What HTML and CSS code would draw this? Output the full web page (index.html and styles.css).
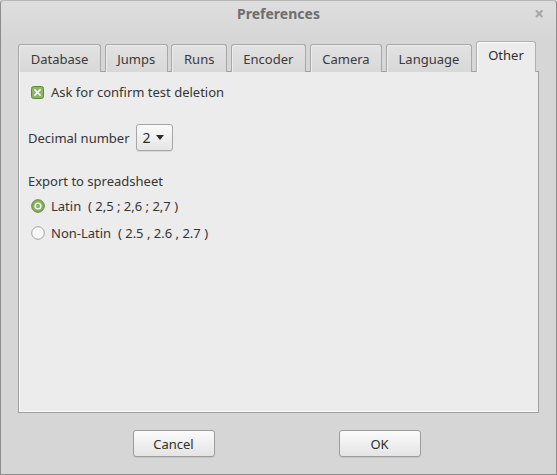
FILE: index.html
```html
<!DOCTYPE html>
<html>
<head>
<meta charset="utf-8">
<link rel="stylesheet" href="styles.css">
</head>
<body>
<div class="window">
  <div class="titlebar">
    <span></span>
    <span class="title">Preferences</span>
    <span class="close">×</span>
  </div>
  <div class="notebook">
    <div class="tabs">
      <div class="tab">Database</div>
      <div class="tab">Jumps</div>
      <div class="tab">Runs</div>
      <div class="tab">Encoder</div>
      <div class="tab">Camera</div>
      <div class="tab">Language</div>
      <div class="tab active">Other</div>
    </div>
    <div class="panel">
      <div class="row check-row">
        <svg class="check" width="13" height="13" viewBox="0 0 13 13">
          <rect x="0.5" y="0.5" width="12" height="12" rx="2" fill="#8db466" stroke="#5e8a3e"/>
          <path d="M4 4 L9 9 M9 4 L4 9" stroke="#ffffff" stroke-width="1.6" stroke-linecap="square"/>
        </svg>
        <span>Ask for confirm test deletion</span>
      </div>
      <div class="row decimal-row">
        <span>Decimal number</span>
        <div class="combo"><span>2</span><span class="arrow"></span></div>
      </div>
      <div class="row label-row">Export to spreadsheet</div>
      <div class="row radio-row">
        <svg class="radio" width="14" height="14" viewBox="0 0 14 14">
          <circle cx="7" cy="7" r="6.3" fill="#86b060" stroke="#5c8a3c"/>
          <circle cx="7" cy="7" r="3.6" fill="#ffffff"/>
          <circle cx="7" cy="7" r="2.2" fill="#8ab866"/>
        </svg>
        <span>Latin&nbsp; ( 2,5 ; 2,6 ; 2,7 )</span>
      </div>
      <div class="row radio-row">
        <svg class="radio" width="14" height="14" viewBox="0 0 14 14">
          <circle cx="7" cy="7" r="6.3" fill="#f7f7f7" stroke="#a2a2a2"/>
        </svg>
        <span>Non-Latin&nbsp; ( 2.5 , 2.6 , 2.7 )</span>
      </div>
    </div>
  </div>
  <div class="buttons">
    <div class="btn">Cancel</div>
    <div class="btn">OK</div>
  </div>
</div>
</body>
</html>
```
FILE: styles.css
```css
html, body {
  margin: 0;
  padding: 0;
  background: #d6d6d6;
}
body {
  font-family: "Noto Sans", "DejaVu Sans", sans-serif;
  font-size: 13px;
  color: #353535;
}
.window {
  width: 557px;
  height: 475px;
  box-sizing: border-box;
  border: 1px solid #8d8d8d;
  border-top-color: #b8b8b8;
  border-radius: 4px 4px 0 0;
  background: linear-gradient(#dedede, #d6d6d6 40px);
  display: flex;
  flex-direction: column;
}
.titlebar {
  height: 25px;
  display: grid;
  grid-template-columns: 1fr auto 1fr;
  align-items: center;
}
.title {
  font-weight: bold;
  font-size: 14px;
  color: #6e6e6e;
}
.close {
  justify-self: end;
  margin-right: 12px;
  font-size: 17px;
  font-weight: bold;
  color: #a4a4a4;
}
.notebook {
  margin: 16px 0 0 17px;
  width: 521px;
}
.tabs {
  display: flex;
  align-items: flex-end;
  gap: 3.5px;
  height: 30px;
  position: relative;
  z-index: 1;
  margin-bottom: -1px;
}
.tab {
  height: 28px;
  box-sizing: border-box;
  padding: 0 11.7px;
  line-height: 28px;
  white-space: nowrap;
  border: 1px solid #a8a8a8;
  border-bottom: none;
  border-radius: 3px 3px 0 0;
  background: linear-gradient(#e2e2e2, #d8d8d8);
  box-shadow: inset 1px 1px 0 #ececec;
  color: #3a3a3a;
}
.tab.active {
  height: 31px;
  line-height: 27px;
  background: #ececec;
  border-color: #b0b0b0;
  box-shadow: inset 1px 1px 0 #fafafa;
  color: #2f2f2f;
}
.panel {
  height: 342px;
  box-sizing: border-box;
  border: 1px solid #9e9e9e;
  background: #ececec;
  box-shadow: inset 1px -1px 0 #fafafa;
  padding: 13px 0 0 12px;
}
.row {
  display: flex;
  align-items: center;
}
.check-row {
  height: 14px;
  gap: 7px;
}
.check {
  display: block;
}
.decimal-row {
  margin-top: 25px;
  gap: 6px;
  margin-left: -3px;
}
.combo {
  width: 37px;
  height: 27px;
  box-sizing: border-box;
  border: 1px solid #a6a6a6;
  border-radius: 3px;
  background: linear-gradient(#fafafa, #e6e6e6);
  box-shadow: 0 1px 0 rgba(0,0,0,0.08);
  display: flex;
  align-items: center;
  justify-content: space-between;
  padding: 0 8px 0 6px;
  font-size: 14px;
  color: #2e2e2e;
}
.arrow {
  width: 0;
  height: 0;
  border-left: 4px solid transparent;
  border-right: 4px solid transparent;
  border-top: 5px solid #2a2a2a;
}
.label-row {
  margin-top: 21px;
  margin-left: -3px;
}
.radio-row {
  gap: 6px;
  height: 27px;
  margin-left: 0;
}
.label-row + .radio-row {
  margin-top: 2px;
}
.radio {
  display: block;
}
.buttons {
  display: flex;
  justify-content: center;
  gap: 124px;
  margin-top: 17px;
  padding-right: 4px;
}
.btn {
  width: 82px;
  height: 27px;
  box-sizing: border-box;
  border: 1px solid #9c9c9c;
  border-radius: 3px;
  background: linear-gradient(#fbfbfb, #e4e4e4);
  box-shadow: 0 1px 0 rgba(0,0,0,0.08);
  display: flex;
  align-items: center;
  justify-content: center;
  color: #2e2e2e;
}
```
